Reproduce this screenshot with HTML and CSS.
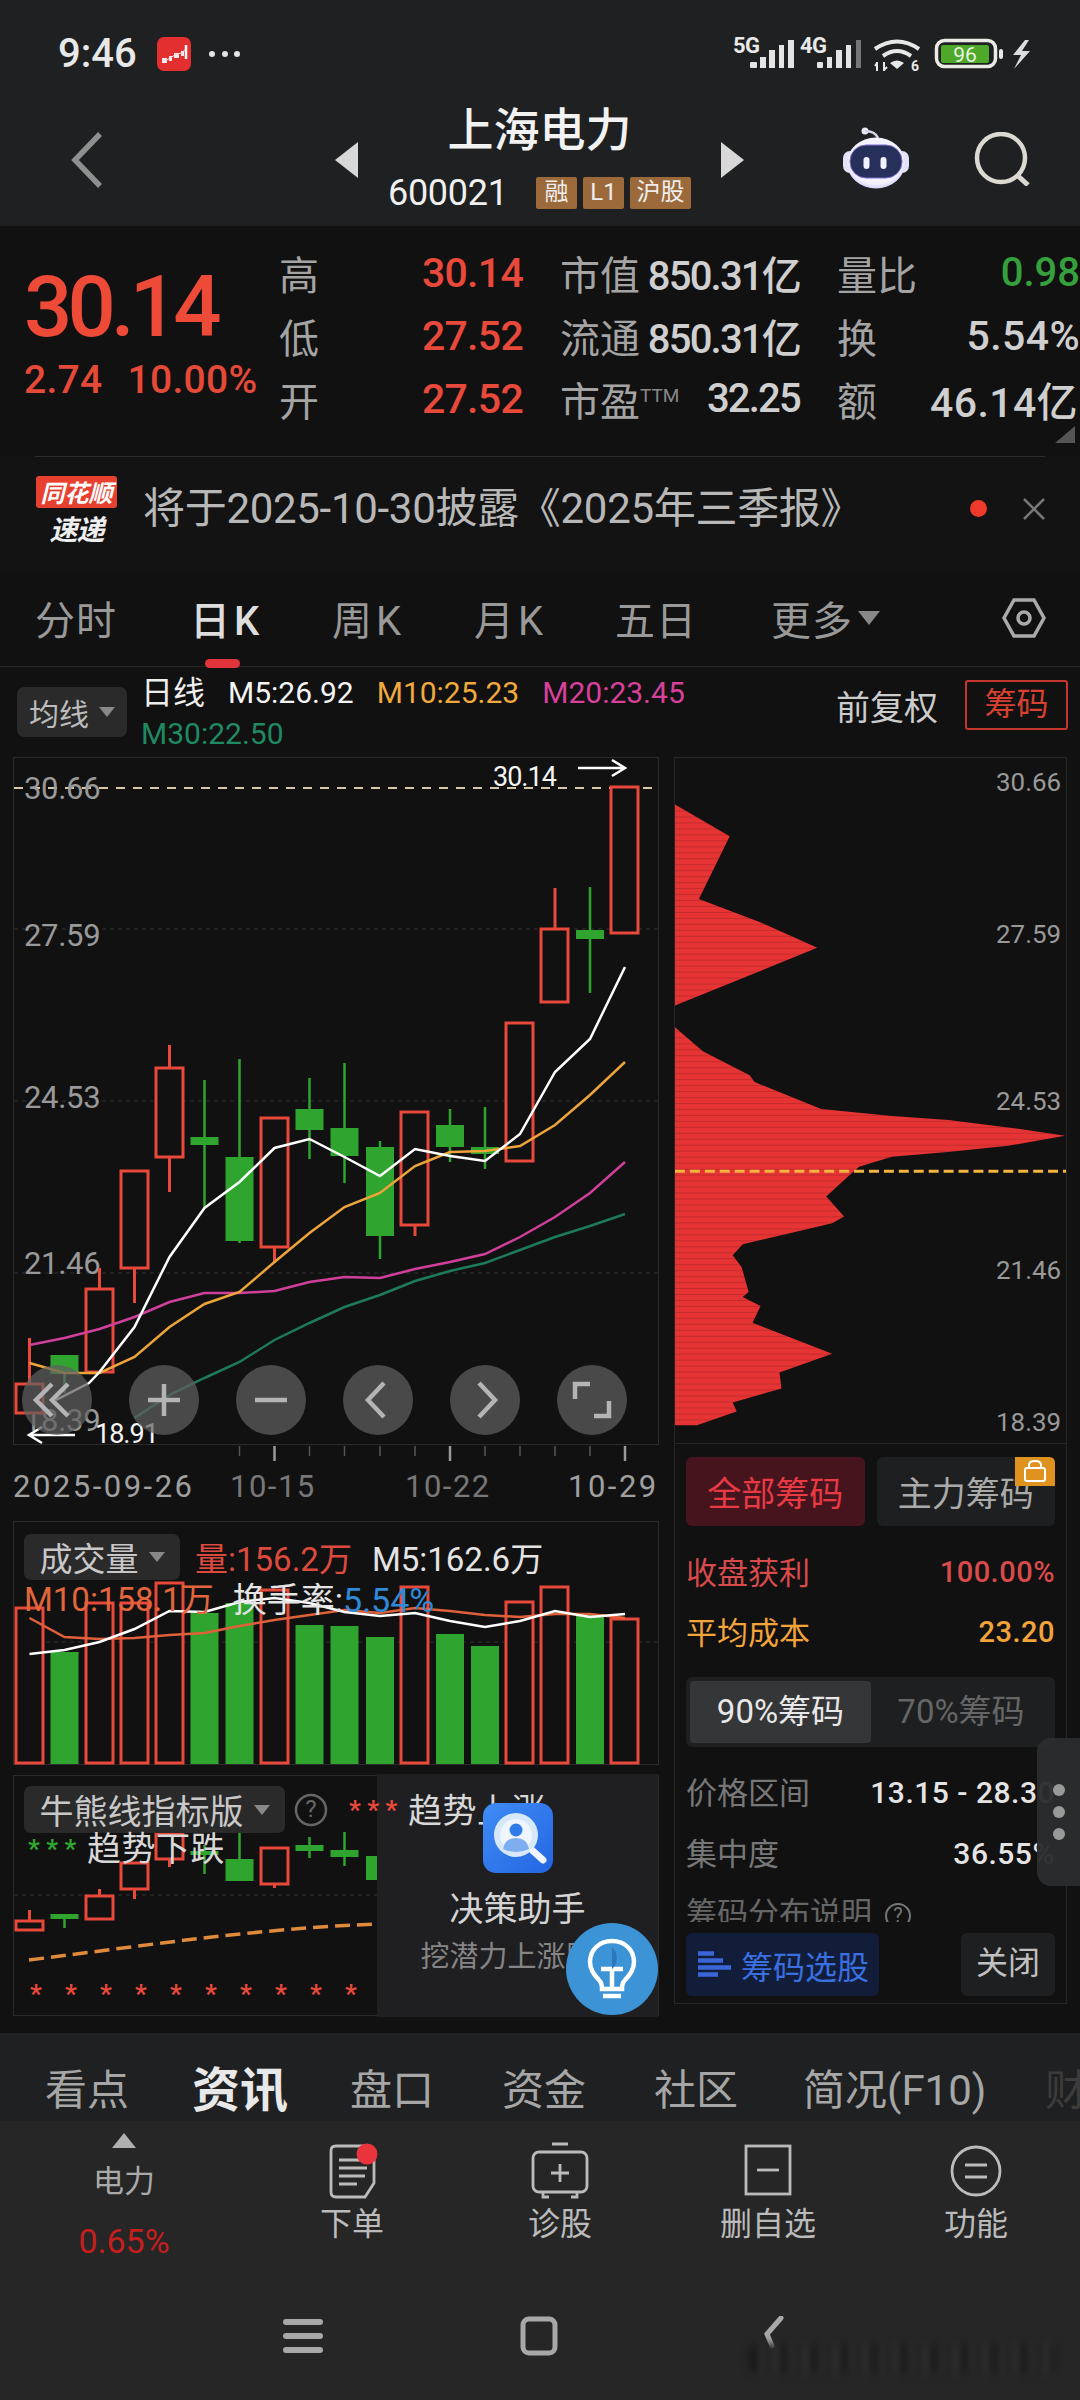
FILE: index.html
```html
<!DOCTYPE html>
<html lang="zh">
<head>
<meta charset="utf-8">
<title>上海电力</title>
<link rel="stylesheet" href="styles.css">
</head>
<body>
<div class="page">
  <header class="head">
    <div class="status">
      <span class="clock">9:46</span>
      <svg class="app-icon" viewBox="0 0 34 34"><rect width="34" height="34" rx="7" fill="#e32f2f"/><path d="M5 21h5v5H5zM12 19h3v5h-3zM17 16h5v5h-5zM24 14h3v5h-3z" fill="#fff" opacity=".9"/><path d="M29 8v14" stroke="#fff" stroke-width="2.500"/><path d="M10 23l3-2 5-3 6-2 4-3" fill="none" stroke="#ffd8d8" stroke-width="1"/></svg>
      <div class="more-dots"><i></i><i></i><i></i></div>
      <svg class="status-icons" viewBox="733 34 300 40">
        <text x="733" y="53" class="net">5G</text>
        <g fill="#e4e4e4"><rect x="750" y="62" width="7" height="6" rx="1"/><rect x="760" y="57" width="6" height="11"/><rect x="769" y="50" width="6" height="18"/><rect x="779" y="45" width="5" height="23"/><rect x="788" y="40" width="6" height="28"/></g>
        <text x="800" y="53" class="net">4G</text>
        <g fill="#e4e4e4"><rect x="817" y="62" width="6" height="6" rx="1"/><rect x="827" y="57" width="5" height="11"/><rect x="836" y="50" width="6" height="18"/><rect x="846" y="45" width="5" height="23"/></g>
        <rect x="856" y="40" width="5" height="28" fill="#777"/>
        <g fill="none" stroke="#e8e8e8" stroke-width="4"><path d="M875 49q22-15 44 0"/><path d="M883 56q14-10 28 0"/></g>
        <path d="M890 63q7-5 14 0l-7 6z" fill="#e8e8e8"/>
        <text x="911" y="71" class="net-small">6</text>
        <path d="M877 62v9M877 63l-2 3M884 71v-9M884 70l3-3" stroke="#e8e8e8" stroke-width="2" fill="none"/>
        <rect x="936.500" y="40.500" width="59" height="26" rx="8" fill="none" stroke="#ebebe6" stroke-width="3.500"/>
        <rect x="941" y="45" width="48" height="18" rx="2" fill="#4ea82a"/>
        <rect x="999" y="49" width="4" height="10" rx="2" fill="#e8e8e8"/>
        <text x="965" y="61.500" text-anchor="middle" class="batt">96</text>
        <path d="M1025 40l-12 15h8l-7 14 16-18h-8l7-11z" fill="#ddd"/>
      </svg>
    </div>
    <div class="titlebar">
      <svg class="back" viewBox="0 0 34 58"><path d="M30 3L5 29l25 26" fill="none" stroke="#8f8f8f" stroke-width="5.500"/></svg>
      <svg class="tri-arrow" viewBox="0 0 23 36"><path d="M23 0v36L0 18z" fill="#d8d8d8"/></svg>
      <div class="stock">
        <div class="stock-name">上海电力</div>
        <div class="stock-code"><span class="code">600021</span><span class="tag">融</span><span class="tag">L1</span><span class="tag tag-wide">沪股</span></div>
      </div>
      <svg class="tri-arrow" viewBox="0 0 23 36"><path d="M0 0v36l23-18z" fill="#d8d8d8"/></svg>
      <svg class="robot" viewBox="0 0 68 62">
        <defs><radialGradient id="helm" cx=".5" cy=".45" r=".65"><stop offset=".7" stop-color="#f4f2ff"/><stop offset="1" stop-color="#b9b2f0"/></radialGradient></defs>
        <circle cx="23" cy="4" r="3.500" fill="#e8e8f4"/><path d="M23 4q10 0 13 7" fill="none" stroke="#d8d8ea" stroke-width="2.500"/>
        <rect x="1" y="24" width="66" height="22" rx="7" fill="#e4e2fa"/>
        <ellipse cx="34" cy="36" rx="29" ry="25.500" fill="url(#helm)"/>
        <rect x="8" y="18" width="52" height="33" rx="16" fill="#27305a" stroke="#7d6fd0" stroke-width="1"/>
        <rect x="21.500" y="30" width="6" height="12" rx="3" fill="#f0f2ff"/><rect x="38.500" y="30" width="6" height="12" rx="3" fill="#f0f2ff"/>
      </svg>
      <svg class="search" viewBox="0 0 58 54"><circle cx="27" cy="26" r="24" fill="none" stroke="#dcd8d2" stroke-width="4.500"/><path d="M43 43l11 10" stroke="#dcd8d2" stroke-width="5"/></svg>
    </div>
  </header>

  <section class="quote">
    <div class="price-box">
      <div class="price">30.14</div>
      <div class="change"><span>2.74</span><span>10.00%</span></div>
    </div>
    <div class="stats">
      <div class="stat"><span class="lab">高</span><span class="red">30.14</span></div>
      <div class="stat"><span class="lab">市值</span><span class="val">850.31亿</span></div>
      <div class="stat"><span class="lab">量比</span><span class="green">0.98</span></div>
      <div class="stat"><span class="lab">低</span><span class="red">27.52</span></div>
      <div class="stat"><span class="lab">流通</span><span class="val">850.31亿</span></div>
      <div class="stat"><span class="lab">换</span><span class="val val-w">5.54%</span></div>
      <div class="stat"><span class="lab">开</span><span class="red">27.52</span></div>
      <div class="stat"><span class="lab">市盈<sup class="ttm">TTM</sup></span><span class="val">32.25</span></div>
      <div class="stat"><span class="lab">额</span><span class="val val-w val-e">46.14亿</span></div>
    </div>
    <i class="corner"></i>
  </section>

  <section class="notice">
    <div class="logo"><span class="logo-top">同花顺</span><span class="logo-bot">速递</span></div>
    <div class="notice-text">将于2025-10-30披露《2025年三季报》</div>
    <i class="notice-dot"></i>
    <svg class="notice-x" viewBox="0 0 24 24"><path d="M2 2l20 20M22 2L2 22" stroke="#777" stroke-width="2.500"/></svg>
  </section>

  <nav class="period">
    <span>分时</span><span class="k on">日K</span><span class="k">周K</span><span class="k">月K</span><span>五日</span>
    <span class="period-more">更多<i class="caret"></i></span>
    <svg class="hex" viewBox="0 0 44 40"><path d="M12 2h20l10 18-10 18H12L2 20z" fill="none" stroke="#aaa" stroke-width="3.500"/><circle cx="22" cy="20" r="6" fill="none" stroke="#aaa" stroke-width="3.500"/></svg>
  </nav>

  <div class="kline-head">
    <div class="pill pill-ma">均线<i class="caret caret-s"></i></div>
    <div class="legend">
      <div class="legend-row"><span class="legend-name">日线</span><span class="c-w">M5:26.92</span><span class="c-o">M10:25.23</span><span class="c-m">M20:23.45</span></div>
      <div class="legend-row"><span class="c-g">M30:22.50</span></div>
    </div>
    <div class="head-right"><span class="fq">前复权</span><span class="chip-btn">筹码</span></div>
  </div>

  <main class="work">
    <div class="charts">
      <div class="kline">
        <svg class="kline-svg" viewBox="13 757 647 764">
          <rect x="13.500" y="757.500" width="645" height="687" fill="none" stroke="#2b2b2b"/>
          <g class="gridline"><path d="M14 929H658M14 1101H658M14 1273H658"/></g>
          <path d="M14 788H658" stroke="#d8c8a8" stroke-width="2" stroke-dasharray="9 8"/>
          <text x="24" y="799" class="axis">30.66</text>
          <text x="24" y="946" class="axis">27.59</text>
          <text x="24" y="1108" class="axis">24.53</text>
          <text x="24" y="1274" class="axis">21.46</text>
          <text x="24" y="1431" class="axis">18.39</text>
          <g class="wick-r"><path d="M29.500 1338V1383M99.500 1268V1289M134.500 1268V1303M169.500 1045V1068M169.500 1157V1192M274.500 1247V1263M415 1225V1236M555 888V929"/></g>
          <g class="wick-g"><path d="M64.500 1373V1393M204.500 1080V1208M239.500 1059V1243M309.500 1078V1159M344.500 1063V1183M380 1141V1259M450 1109V1162M485 1107V1169M590 887V993"/></g>
          <g class="body-r">
            <rect x="16" y="1384" width="27" height="29"/><rect x="86" y="1289" width="27" height="83"/><rect x="121" y="1171" width="27" height="97"/><rect x="156" y="1068" width="27" height="89"/><rect x="261" y="1118" width="27" height="129"/><rect x="401" y="1112" width="27" height="113"/><rect x="506" y="1023" width="27" height="138"/><rect x="541" y="929" width="27" height="73"/><rect x="611" y="787" width="27" height="146"/>
          </g>
          <g class="body-g">
            <rect x="50.500" y="1355" width="28" height="19"/><rect x="190.500" y="1137" width="28" height="8"/><rect x="225.500" y="1157" width="28" height="84"/><rect x="295.500" y="1109" width="28" height="21"/><rect x="330.500" y="1128" width="28" height="28"/><rect x="366" y="1147" width="28" height="89"/><rect x="436" y="1125" width="28" height="22"/><rect x="471" y="1147" width="28" height="7"/><rect x="576" y="930" width="28" height="9"/>
          </g>
          <polyline class="ma ma-g" points="134.500,1418 169.500,1395 204.500,1378 239.500,1362 274.500,1340 309.500,1323 344.500,1307 380,1295 415,1281 450,1271 485,1263 520,1250 555,1237 590,1226 625,1214"/>
          <polyline class="ma ma-m" points="29.500,1345 64.500,1338 99.500,1329 134.500,1317 169.500,1302 204.500,1293 239.500,1293 274.500,1291 309.500,1282 344.500,1277 380,1278 415,1269 450,1262 485,1254 520,1237 555,1217 590,1193 625,1162"/>
          <polyline class="ma ma-o" points="29.500,1363 64.500,1373 99.500,1373 134.500,1357 169.500,1327 204.500,1304 239.500,1292 274.500,1262 309.500,1233 344.500,1207 380,1193 415,1166 450,1152 485,1151 520,1146 555,1125 590,1095 625,1062"/>
          <polyline class="ma ma-w" points="56,1400 89,1383 99.500,1372 134.500,1327 169.500,1257 204.500,1208 239.500,1182 274.500,1148 309.500,1139 344.500,1157 380,1176 415,1149 450,1156 485,1161 520,1134 555,1072 590,1039 625,967"/>
          <text x="493" y="786" class="mark">30.14</text>
          <path d="M578 768H623M612 760l13 8-13 8" class="mark-arrow"/>
          <text x="95" y="1443" class="mark">18.91</text>
          <path d="M75 1435H30M42 1427l-13 8 13 8" class="mark-arrow"/>
          <g class="tick"><path d="M239.500 1446V1456M309.500 1446V1456M344.500 1446V1456M380 1446V1456M415 1446V1456M485 1446V1456M520 1446V1456M555 1446V1456M590 1446V1456"/></g>
          <g class="tick-big"><path d="M274.500 1446V1461M450 1446V1461M625 1446V1461"/></g>
          <text x="13" y="1497" class="date">2025-09-26</text>
          <text x="230" y="1497" class="date date-dim">10-15</text>
          <text x="405" y="1497" class="date date-dim">10-22</text>
          <text x="568" y="1497" class="date">10-29</text>
        </svg>
        <div class="zoom-btns">
          <svg viewBox="0 0 70 70"><circle cx="35" cy="35" r="35" class="zb"/><path d="M30 19L14 35l16 16M46 19L30 35l16 16" class="zb-i"/></svg>
          <svg viewBox="0 0 70 70"><circle cx="35" cy="35" r="35" class="zb"/><path d="M19 35h32M35 19v32" class="zb-i"/></svg>
          <svg viewBox="0 0 70 70"><circle cx="35" cy="35" r="35" class="zb"/><path d="M19 35h32" class="zb-i"/></svg>
          <svg viewBox="0 0 70 70"><circle cx="35" cy="35" r="35" class="zb"/><path d="M41 18L25 35l16 17" class="zb-i"/></svg>
          <svg viewBox="0 0 70 70"><circle cx="35" cy="35" r="35" class="zb"/><path d="M29 18l16 17-16 17" class="zb-i"/></svg>
          <svg viewBox="0 0 70 70"><circle cx="35" cy="35" r="35" class="zb"/><path d="M33 19H18v15M37 51h15V36" class="zb-i"/></svg>
        </div>
      </div>

      <div class="volume">
        <svg class="volume-svg" viewBox="13 1521 647 244">
          <rect x="13.500" y="1521.500" width="645" height="243" fill="none" stroke="#2b2b2b"/>
          <path d="M14 1642H658" class="gridline-p"/>
          <g class="body-r">
            <rect x="16" y="1608" width="27" height="155"/><rect x="86" y="1603" width="27" height="160"/><rect x="121" y="1603" width="27" height="160"/><rect x="156" y="1583" width="27" height="180"/><rect x="261" y="1590" width="27" height="173"/><rect x="401" y="1587" width="27" height="176"/><rect x="506" y="1602" width="27" height="161"/><rect x="541" y="1587" width="27" height="176"/><rect x="611" y="1619" width="27" height="144"/>
          </g>
          <g class="body-g">
            <rect x="50.500" y="1652" width="28" height="112"/><rect x="190.500" y="1613" width="28" height="151"/><rect x="225.500" y="1603" width="28" height="161"/><rect x="295.500" y="1625" width="28" height="139"/><rect x="330.500" y="1626" width="28" height="138"/><rect x="366" y="1637" width="28" height="127"/><rect x="436" y="1634" width="28" height="130"/><rect x="471" y="1646" width="28" height="118"/><rect x="576" y="1614" width="28" height="150"/>
          </g>
          <polyline class="ma ma-vo" points="29.500,1618 64.500,1637 99.500,1639 134.500,1638 169.500,1635 204.500,1633 239.500,1626 274.500,1620 309.500,1615 344.500,1610 380,1613 415,1608 450,1611 485,1615 520,1617 555,1614 590,1614 625,1618"/>
          <polyline class="ma ma-w" points="29.500,1654 64.500,1650 99.500,1642 134.500,1629 169.500,1611 204.500,1612 239.500,1602 274.500,1598 309.500,1603 344.500,1612 380,1616 415,1613 450,1621 485,1627 520,1621 555,1611 590,1617 625,1614"/>
        </svg>
        <div class="vol-legend">
          <div class="vol-row"><div class="pill pill-vol">成交量<i class="caret caret-s"></i></div><span class="c-r">量:156.2万</span><span class="c-w2">M5:162.6万</span></div>
          <div class="vol-row vol-row2"><span class="c-vo">M10:158.1万</span><span class="c-w3">换手率:<b class="c-b">5.54%</b></span></div>
        </div>
      </div>

      <div class="indicator">
        <svg class="ind-svg" viewBox="13 1775 647 242">
          <rect x="13.500" y="1775.500" width="645" height="240" fill="none" stroke="#2b2b2b"/>
          <path d="M14 1895H658" class="gridline-p"/>
          <g class="wick-r"><path d="M29.500 1910V1921M99.500 1889V1895M134.500 1889V1899M169.500 1859V1867M274.500 1884V1888"/></g>
          <g class="wick-g"><path d="M64.500 1919V1928M204.500 1845V1874M239.500 1831V1859M309.500 1837V1858M344.500 1832V1866"/></g>
          <g class="body-r"><rect x="16" y="1921" width="27" height="9"/><rect x="86" y="1896" width="27" height="23"/><rect x="121" y="1863" width="27" height="26"/><rect x="156" y="1834" width="27" height="25"/><rect x="261" y="1848" width="27" height="36"/></g>
          <g class="body-g"><rect x="50.500" y="1914" width="28" height="5"/><rect x="190.500" y="1851" width="28" height="4"/><rect x="225.500" y="1859" width="28" height="22"/><rect x="295.500" y="1845" width="28" height="6"/><rect x="330.500" y="1850" width="28" height="7"/><rect x="366" y="1856" width="28" height="24"/></g>
          <path d="M29 1960C150 1945 260 1928 380 1924" class="ind-dash"/>
          <g class="star"><text x="36" y="2003">*</text><text x="71" y="2003">*</text><text x="106" y="2003">*</text><text x="141" y="2003">*</text><text x="176" y="2003">*</text><text x="211" y="2003">*</text><text x="246" y="2003">*</text><text x="281" y="2003">*</text><text x="316" y="2003">*</text><text x="351" y="2003">*</text></g>
        </svg>
        <div class="ind-legend">
          <div class="ind-row"><div class="pill pill-ind">牛熊线指标版<i class="caret caret-s"></i></div><svg class="qmark" viewBox="0 0 34 34"><circle cx="17" cy="17" r="15" fill="none" stroke="#666" stroke-width="2.500"/><text x="17" y="24" text-anchor="middle" class="qmark-t">?</text></svg><span class="stars-r">* * *</span><span class="trend">趋势上涨</span></div>
          <div class="ind-row ind-row2"><span class="stars-g">* * *</span><span class="trend">趋势下跌</span></div>
        </div>
        <aside class="helper">
          <svg class="helper-icon" viewBox="0 0 70 70">
            <defs><linearGradient id="hb" x1="0" y1="0" x2="1" y2="1"><stop offset="0" stop-color="#3f8cf5"/><stop offset="1" stop-color="#2466e2"/></linearGradient></defs>
            <rect width="70" height="70" rx="13" fill="url(#hb)"/>
            <circle cx="33" cy="32" r="22" fill="#d8e8fb"/><circle cx="33" cy="32" r="16" fill="#eef5fd"/>
            <circle cx="33" cy="27" r="6.500" fill="#2f7be8"/><path d="M20 46q2-11 13-11t13 11q-13 6-26 0z" fill="#7faef0"/>
            <path d="M50 48l10 9" stroke="#eef5fd" stroke-width="7" stroke-linecap="round"/>
          </svg>
          <div class="helper-title">决策助手</div>
          <div class="helper-sub">挖潜力上涨股</div>
          <svg class="bulb" viewBox="0 0 92 92"><circle cx="46" cy="46" r="46" fill="#3c93d5"/><path d="M46 18c-13 0-22 9-22 21 0 8 4 13 9 18 3 3 3 6 3 9h20c0-3 0-6 3-9 5-5 9-10 9-18 0-12-9-21-22-21z" fill="none" stroke="#fff" stroke-width="4.500"/><path d="M35 46h22M46 46v20M37 73h18" fill="none" stroke="#fff" stroke-width="4.500"/><path d="M46 24a15 15 0 0 1 0 22z" fill="#2b77bb"/></svg>
        </aside>
      </div>
    </div>

    <div class="chips">
      <div class="hist">
        <svg class="hist-svg" viewBox="675 757 393 687">
          <defs><pattern id="stripe" patternUnits="userSpaceOnUse" width="8" height="6"><rect width="8" height="6" fill="#e63333"/><rect y="5" width="8" height="1" fill="#c42d2d"/></pattern></defs>
          <polygon fill="url(#stripe)" points="675,803 730,835 699,898 760,921 818,947 675,1005"/>
          <polygon fill="url(#stripe)" points="675,1027 703,1051 750,1075 755,1082 822,1109 893,1116 950,1120 1020,1129 1067,1136 1010,1146 952,1152 893,1157 860,1167 850,1176 827,1197 845,1217 833,1224 743,1245 733,1256 742,1268 749,1293 743,1298 761,1307 753,1324 833,1355 780,1374 782,1390 733,1404 737,1413 697,1427 675,1427"/>
          <path d="M675 1171.500H1068" stroke="#f4b53f" stroke-width="3" stroke-dasharray="10 5"/>
          <g class="hist-axis"><text x="1063" y="789">30.66</text><text x="1063" y="942">27.59</text><text x="1063" y="1110">24.53</text><text x="1063" y="1280">21.46</text><text x="1063" y="1433">18.39</text></g>
        </svg>
      </div>
      <div class="panel">
        <div class="ptabs">
          <span class="ptab ptab-on">全部筹码</span>
          <span class="ptab">主力筹码
            <svg class="lock" viewBox="0 0 40 29"><path d="M0 0h34q6 0 6 6v23H0z" fill="#e0921f"/><rect x="10" y="11" width="20" height="13" rx="2" fill="none" stroke="#fff" stroke-width="2"/><path d="M14 11V8q0-4 6-4t6 4v3" fill="none" stroke="#fff" stroke-width="2"/></svg>
          </span>
        </div>
        <div class="prow prow-r"><span>收盘获利</span><b>100.00%</b></div>
        <div class="prow prow-o"><span>平均成本</span><b>23.20</b></div>
        <div class="seg"><span class="seg-on">90%筹码</span><span>70%筹码</span></div>
        <div class="prow prow-g prow-first"><span>价格区间</span><b>13.15 - 28.30</b></div>
        <div class="prow prow-g"><span>集中度</span><b>36.55%</b></div>
        <div class="explain"><span>筹码分布说明</span><svg class="qmark2" viewBox="0 0 28 28"><circle cx="14" cy="14" r="12" fill="none" stroke="#777" stroke-width="2"/><text x="14" y="20" text-anchor="middle" class="qmark2-t">?</text></svg></div>
        <div class="pbtns">
          <span class="pbtn-blue"><svg class="bars" viewBox="0 0 33 27"><path d="M0 2.500h16M0 9.500h25M0 16.500h33M0 23.500h20" stroke="#3a66d8" stroke-width="4.500" fill="none"/></svg>筹码选股</span>
          <span class="pbtn-close">关闭</span>
        </div>
      </div>
      <div class="handle"><i></i><i></i><i></i></div>
    </div>
  </main>

  <nav class="info-tabs">
    <span>看点</span><span class="info-on">资讯</span><span>盘口</span><span>资金</span><span>社区</span><span>简况(F10)</span><span class="info-dim">财务</span>
  </nav>

  <footer class="foot">
    <div class="actions">
      <div class="act-index"><i class="up-tri"></i><span class="idx-name">电力</span><span class="idx-pct">0.65%</span></div>
      <div class="act">
        <svg viewBox="0 0 60 60"><path d="M14 5h28l10 6v31l-9 14H14q-5 0-5-5V10q0-5 5-5z" fill="none" stroke="#bbb" stroke-width="2.800"/><path d="M17 19h24M17 27h28M17 35h26M17 43h18" stroke="#bbb" stroke-width="2.800"/><circle cx="45" cy="13" r="10.500" fill="#e8343a"/></svg>
        <span>下单</span>
      </div>
      <div class="act">
        <svg viewBox="0 0 60 60"><path d="M22 3h16" stroke="#bbb" stroke-width="3"/><rect x="3" y="11" width="54" height="40" rx="6" fill="none" stroke="#bbb" stroke-width="2.800"/><path d="M30 23v18M21 32h18M13 51v5h6M47 51v5h-6" fill="none" stroke="#bbb" stroke-width="2.800"/></svg>
        <span>诊股</span>
      </div>
      <div class="act">
        <svg viewBox="0 0 60 60"><rect x="8" y="5" width="44" height="48" fill="none" stroke="#bbb" stroke-width="2.800"/><path d="M19 29h22" stroke="#bbb" stroke-width="2.800"/></svg>
        <span>删自选</span>
      </div>
      <div class="act">
        <svg viewBox="0 0 60 60"><circle cx="30" cy="30" r="24" fill="none" stroke="#bbb" stroke-width="2.800"/><path d="M19 24h22M19 36h22" stroke="#bbb" stroke-width="2.800"/></svg>
        <span>功能</span>
      </div>
    </div>
    <div class="sysnav">
      <svg class="sys" viewBox="0 0 40 40"><path d="M3 6h34M3 20h34M3 34h34" stroke="#a8a8a8" stroke-width="6" stroke-linecap="round"/></svg>
      <svg class="sys" viewBox="0 0 40 40"><rect x="4" y="3" width="32" height="34" rx="6" fill="none" stroke="#a8a8a8" stroke-width="5"/></svg>
      <svg class="sys" viewBox="0 0 40 40"><path d="M26 2L12 18l5 12" fill="none" stroke="#a8a8a8" stroke-width="5" stroke-linecap="round"/></svg>
      <div class="smudge"></div>
    </div>
  </footer>
</div>
</body>
</html>
```

FILE: styles.css
```css
* { box-sizing: border-box; margin: 0; padding: 0; }
html, body { width: 1080px; height: 2400px; overflow: hidden; background: #111112; }
body { font-family: Roboto, "Noto Sans CJK SC", sans-serif; color: #ccc; }
.page { width: 1080px; height: 2400px; display: flex; flex-direction: column; position: relative; overflow: hidden; }
i { font-style: normal; display: block; }

/* header */
.head { height: 226px; background: #1f2021; }
.status { height: 100px; display: flex; align-items: center; padding: 8px 0 0 58px; position: relative; }
.clock { font-size: 40px; font-weight: 500; color: #e8e8e8; width: 99px; line-height: 44px; }
.app-icon { width: 34px; height: 34px; }
.more-dots { display: flex; gap: 6.500px; margin-left: 18px; }
.more-dots i { width: 6px; height: 6px; border-radius: 50%; background: #e4e4e4; }
.status-icons { width: 300px; height: 40px; position: absolute; left: 733px; top: 34px; }
.net { font: 700 22px Roboto, sans-serif; fill: #e8e8e8; letter-spacing: -0.500px; }
.net-small { font: 700 14px Roboto, sans-serif; fill: #e8e8e8; }
.batt { font: 400 21px Roboto, sans-serif; fill: #e8f4e0; }
.titlebar { height: 126px; display: flex; align-items: flex-start; padding-left: 70px; }
.back { width: 34px; height: 58px; margin-top: 31px; margin-right: 231px; }
.tri-arrow { width: 23px; height: 36px; margin-top: 42px; }
.stock { width: 363px; display: flex; flex-direction: column; align-items: center; }
.stock-name { font-size: 46px; font-weight: 500; color: #f2f2f2; line-height: 60px; }
.stock-code { display: flex; align-items: center; margin-top: 17px; height: 32px; }
.code { font-size: 36px; color: #f0f0f0; width: 148px; letter-spacing: -0.300px; }
.tag { height: 32px; width: 41px; background: #9c6a3a; color: #eee; font-size: 24px; line-height: 31px; text-align: center; border-radius: 2px; margin-right: 6px; }
.tag-wide { width: 61px; margin-right: 0; }
.robot { width: 68px; height: 62px; margin: 27px 0 0 98px; }
.search { width: 58px; height: 54px; margin: 32px 0 0 64px; }

/* quote */
.quote { height: 230px; display: flex; background: #111112; position: relative; }
.price-box { width: 279px; padding: 43px 0 0 24px; }
.price { font-size: 85px; font-weight: 500; color: #ed4a38; line-height: 76px; letter-spacing: -4.800px; }
.change { display: flex; gap: 25px; color: #e54a38; font-size: 39px; font-weight: 500; line-height: 44px; margin-top: 13px; letter-spacing: 0.300px; }
.stats { padding-top: 15px; display: grid; grid-template-columns: 244px 240px 243px; column-gap: 37px; grid-auto-rows: 63px; font-size: 40px; font-weight: 500; align-items: center; }
.stat { display: flex; justify-content: space-between; align-items: center; white-space: nowrap; }
.lab { color: #a4a4a4; font-size: 40px; font-weight: 400; }
.red { color: #e8493a; font-size: 41px; letter-spacing: -0.700px; }
.green { color: #36a13c; }
.val { color: #cfcfcf; letter-spacing: -1.800px; }
.val-w { font-size: 41px; letter-spacing: 0.400px; }
.val-e { margin-right: 2px; }
.ttm { font-size: 19px; vertical-align: 14px; color: #888; line-height: 0; }
.corner { position: absolute; right: 5px; bottom: 13px; width: 0; height: 0; border-left: 20px solid transparent; border-bottom: 17px solid #555; }

/* notice */
.notice { height: 117px; display: flex; align-items: center; padding: 0 0 14px 36px; position: relative; background: #131314; }
.notice::before { content: ""; position: absolute; left: 35px; right: 35px; top: 0; height: 1px; background: #2e2e2e; }
.logo { width: 81px; height: 72px; display: flex; flex-direction: column; align-items: center; padding-top: 4px; }
.logo-top { width: 81px; height: 32px; background: #e8402f; color: #fff; font: italic 700 24px/32px "Noto Sans CJK SC", sans-serif; text-align: center; border-radius: 3px; }
.logo-bot { color: #eee; font: italic 700 28px/34px "Noto Sans CJK SC", sans-serif; letter-spacing: -1px; margin-top: 3px; }
.notice-text { font-size: 42px; color: #b8b8b8; margin: 0 0 7px 26px; letter-spacing: -0.300px; white-space: nowrap; }
.notice-dot { width: 17px; height: 17px; border-radius: 50%; background: #ee3a2a; position: absolute; left: 970px; top: 44px; }
.notice-x { width: 24px; height: 24px; position: absolute; left: 1022px; top: 41px; }

/* period tabs */
.period { height: 94px; border-bottom: 1px solid #2b2b2b; display: grid; grid-template-columns: 155px 142px 142px 141px 156px 231px auto; align-items: center; padding: 0 0 4px 35px; font-size: 40px; color: #999; position: relative; }
.period span { letter-spacing: 1px; }
.period .k { letter-spacing: 4px; }
.period .on { color: #ddd; font-weight: 500; position: relative; }
.period .on::after { content: ""; position: absolute; left: 15px; bottom: -21px; width: 35px; height: 9px; border-radius: 5px; background: #e2343a; }
.period-more { display: flex; align-items: center; }
.caret { width: 0; height: 0; margin-left: 5px; border-left: 11px solid transparent; border-right: 11px solid transparent; border-top: 14px solid #888; }
.caret-s { border-left-width: 8px; border-right-width: 8px; border-top-width: 10px; margin-left: 10px; }
.hex { width: 44px; height: 40px; }

/* k head */
.kline-head { height: 90px; display: flex; padding-left: 17px; position: relative; }
.pill { background: #2a2a2b; border-radius: 7px; display: flex; align-items: center; justify-content: center; color: #bbb; }
.pill-ma { width: 110px; height: 50px; margin-top: 20px; font-size: 30px; }
.legend { margin-left: 14px; font-size: 30px; padding-top: 6px; }
.legend-row { display: flex; gap: 23px; line-height: 40px; height: 40px; white-space: nowrap; }
.legend-row + .legend-row { margin-top: 1px; }
.legend-name { font-size: 32px; color: #eee; }
.c-w { color: #f5f5f5; }
.c-o { color: #f0a93c; }
.c-m { color: #d8409a; }
.c-g { color: #1f8a62; }
.head-right { position: absolute; left: 836px; top: 13px; width: 232px; display: flex; align-items: center; justify-content: space-between; }
.fq { font-size: 34px; color: #ccc; }
.chip-btn { width: 103px; height: 50px; border: 2px solid #c6362f; color: #d8402f; border-radius: 3px; font-size: 32px; text-align: center; line-height: 44px; }

/* work area */
.work { height: 1276px; display: grid; grid-template-columns: 661px 393px; padding-left: 13px; padding-bottom: 16px; }
.charts { width: 647px; display: flex; flex-direction: column; }
.kline { height: 764px; position: relative; }
.kline-svg { width: 647px; height: 764px; display: block; }
.gridline path, .gridline-p { stroke: #333; stroke-width: 1; stroke-dasharray: 4 4; fill: none; }
.axis { font: 31px Roboto, sans-serif; fill: #999; letter-spacing: -0.300px; }
.wick-r path { stroke: #e8493a; stroke-width: 3; fill: none; }
.wick-g path { stroke: #2fa52f; stroke-width: 2.500; fill: none; }
.body-r rect { fill: #111112; stroke: #e8493a; stroke-width: 3; }
.body-g rect { fill: #2fa52f; }
.ma { fill: none; stroke-width: 2.500; }
.ma-w { stroke: #fff; }
.ma-o { stroke: #eda53a; }
.ma-m { stroke: #d0409a; }
.ma-g { stroke: #1d7a5a; }
.ma-vo { stroke: #e0603a; }
.mark { font: 27px Roboto, sans-serif; fill: #f4f4f4; letter-spacing: -1px; }
.mark-arrow { stroke: #fff; stroke-width: 2.500; fill: none; }
.tick path { stroke: #555; stroke-width: 1.500; }
.tick-big path { stroke: #999; stroke-width: 2.500; }
.date { font: 31px Roboto, sans-serif; fill: #a0a0a0; letter-spacing: 2.500px; }
.date-dim { fill: #777; letter-spacing: 1.500px; }
.zoom-btns { position: absolute; left: 9px; top: 608px; display: flex; gap: 37px; }
.zoom-btns svg { width: 70px; height: 70px; display: block; }
.zb { fill: rgba(96, 96, 96, 0.72); }
.zb-i { fill: none; stroke: #b4b4b4; stroke-width: 4.500; }

.volume { height: 243px; position: relative; margin-bottom: 11px; }
.volume-svg { width: 647px; height: 244px; display: block; }
.vol-legend { position: absolute; left: 11px; top: 12px; font-size: 32px; }
.vol-row { display: flex; align-items: center; gap: 15px; white-space: nowrap; }
.pill-vol { width: 156px; height: 46px; font-size: 33px; color: #c8c8c8; }
.vol-row2 { line-height: 38px; gap: 21px; font-size: 33px; }
.c-r { color: #dc4a3e; font-size: 33px; }
.c-w2 { color: #e4e4e4; margin-left: 5px; font-size: 33px; }
.c-w3 { color: #e4e4e4; font-size: 34px; margin-left: -2px; }
.c-vo { color: #e2663c; }
.c-b { font-weight: 400; color: #2f8ad8; }

.indicator { height: 242px; position: relative; }
.ind-svg { width: 647px; height: 242px; display: block; }
.ind-dash { stroke: #e08a3c; stroke-width: 3.500; stroke-dasharray: 15 7; fill: none; }
.star text { font: 700 26px Roboto, sans-serif; fill: #e8493a; text-anchor: middle; }
.ind-legend { position: absolute; left: 11px; top: 11px; z-index: 2; }
.ind-row { display: flex; align-items: center; white-space: nowrap; }
.pill-ind { width: 261px; height: 47px; font-size: 34px; color: #c8c8c8; }
.qmark { width: 34px; height: 34px; margin: 0 21px 0 9px; }
.qmark-t { font: 24px Roboto, sans-serif; fill: #666; }
.stars-r, .stars-g { font: 700 26px/26px Roboto, sans-serif; color: #e8493a; width: 59px; }
.stars-g { color: #2fa52f; margin-left: 4px; }
.trend { font-size: 34px; color: #d8d8d8; letter-spacing: 0.500px; margin-top: -3px; }
.ind-row2 { line-height: 44px; margin-top: -6px; }
.ind-row2 .trend { margin-top: 0; }
.helper { position: absolute; left: 364px; top: -1px; width: 281px; height: 243px; background: #1f1f21; display: flex; flex-direction: column; align-items: center; padding-top: 29px; color: #ccc; }
.helper-icon { width: 70px; height: 70px; position: relative; z-index: 4; }
.helper-title { font-size: 34px; color: #d4d4d4; margin-top: 11px; line-height: 50px; }
.helper-sub { font-size: 29px; color: #858585; margin-top: 3px; line-height: 40px; margin-right: 20px; white-space: nowrap; }
.bulb { position: absolute; left: 189px; top: 149px; width: 92px; height: 92px; z-index: 4; }

/* right side */
.chips { width: 393px; position: relative; }
.hist { height: 687px; }
.hist-svg { width: 393px; height: 687px; display: block; border: 1px solid #262626; }
.hist-axis text { font: 26px Roboto, sans-serif; fill: #999; text-anchor: end; }
.panel { height: 560px; padding: 13px 11px 0 11px; border: 1px solid #262626; border-top: none; overflow: hidden; }
.ptabs { display: flex; gap: 12px; }
.ptab { width: 179px; height: 69px; background: #1e1f20; border-radius: 6px; color: #aaa; font-size: 34px; display: flex; align-items: center; justify-content: center; position: relative; white-space: nowrap; }
.ptab-on { background: #45141c; color: #e83a45; }
.lock { position: absolute; right: 0; top: 0; width: 40px; height: 29px; }
.prow { height: 60px; display: flex; align-items: center; justify-content: space-between; font-size: 31px; white-space: nowrap; }
.prow span { margin-top: -3px; }
.prow b { font-weight: 500; font-size: 29px; letter-spacing: 0.500px; }
.ptabs + .prow { margin-top: 16px; }
.prow-r { color: #d94a4a; }
.prow-o { color: #f2a33a; }
.prow-g { color: #777; height: 62px; }
.prow-g b { color: #e4e4e4; font-size: 30px; }
.prow-first { margin-top: 15px; height: 60px; }
.seg { margin-top: 15px; height: 70px; background: #1e1f20; border-radius: 6px; padding: 4px; display: grid; grid-template-columns: 181px 1fr; font-size: 33px; color: #666; align-items: center; text-align: center; }
.seg span { line-height: 62px; }
.seg-on { background: #353637; border-radius: 4px; color: #e8e8e8; }
.explain { height: 38px; overflow: hidden; font-size: 31px; color: #666; display: flex; align-items: flex-start; line-height: 60px; }
.qmark2 { width: 28px; height: 28px; margin: 18px 0 0 12px; flex: none; }
.qmark2-t { font: 20px Roboto, sans-serif; fill: #777; }
.pbtns { display: flex; justify-content: space-between; margin-top: 11px; }
.pbtn-blue { width: 193px; height: 63px; background: #121d3a; border-radius: 6px; color: #3a6fe0; font-size: 32px; display: flex; align-items: center; gap: 10px; padding-left: 12px; white-space: nowrap; }
.bars { width: 33px; height: 27px; flex: none; }
.pbtn-close { width: 94px; height: 63px; background: #1e1f20; border-radius: 6px; color: #c0c0c0; font-size: 32px; text-align: center; line-height: 61px; }
.handle { position: absolute; right: -13px; top: 981px; width: 43px; height: 148px; background: rgba(44, 45, 46, 0.96); border-radius: 14px 0 0 14px; display: flex; flex-direction: column; align-items: center; justify-content: center; gap: 10px; }
.handle i { width: 12px; height: 12px; border-radius: 50%; background: #999; }

/* info tabs */
.info-tabs { height: 88px; background: #1f2021; display: grid; grid-template-columns: 147px 158px 152px 152px 149px 242px 60px; padding: 27px 0 0 45px; align-items: center; font-size: 42px; line-height: 58px; color: #a6a6a6; white-space: nowrap; overflow: hidden; }
.info-on { font-size: 48px; font-weight: 700; color: #e8e8e8; }
.info-dim { color: #3c3c3c; }

/* footer */
.foot { height: 279px; background: #262626; position: relative; }
.actions { height: 179px; display: grid; grid-template-columns: 248px repeat(4, 208px); }
.act-index { display: flex; flex-direction: column; align-items: center; padding-top: 12px; }
.up-tri { width: 0; height: 0; border-left: 12px solid transparent; border-right: 12px solid transparent; border-bottom: 15px solid #b0b0b0; }
.idx-name { font-size: 31px; color: #aaa; margin-top: 12px; line-height: 44px; }
.idx-pct { font-size: 34px; color: #c41f1f; margin-top: 15px; line-height: 44px; }
.act { display: flex; flex-direction: column; align-items: center; padding-top: 20px; font-size: 32px; color: #bbb; }
.act svg { width: 60px; height: 60px; }
.act span { line-height: 44px; margin-top: 1px; }
.sysnav { height: 100px; display: grid; grid-template-columns: repeat(3, 236px); padding-left: 185px; justify-items: center; align-items: start; padding-top: 16px; position: relative; }
.sys { width: 40px; height: 40px; }
.smudge { position: absolute; left: 750px; top: 44px; width: 305px; height: 30px; background: repeating-linear-gradient(90deg, #151515 0 9px, #3a3a3a 9px 14px, #1c1c1c 14px 22px, #333 22px 30px); filter: blur(4px); border-radius: 8px; }
```
